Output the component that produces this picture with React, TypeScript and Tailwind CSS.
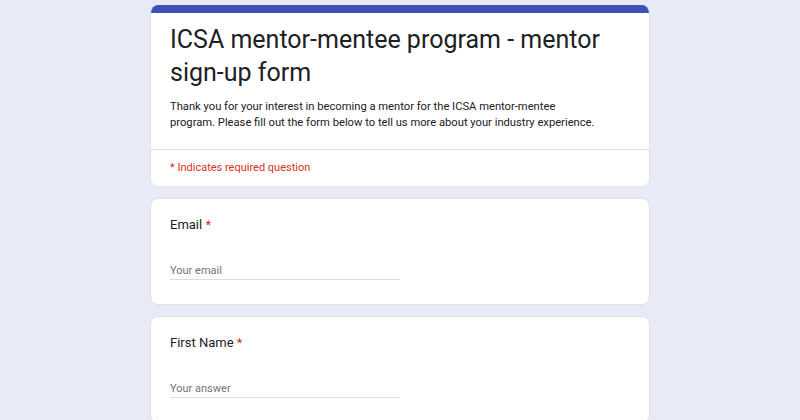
const fields = [
  { label: 'Email', placeholder: 'Your email' },
  { label: 'First Name', placeholder: 'Your answer' },
];

function QuestionCard({ label, placeholder }: { label: string; placeholder: string }) {
  return (
    <div className="bg-white rounded-lg border border-[#dfe2ec] px-[19px] pt-[16px] pb-[24px]">
      <div className="text-[13px] leading-[20px] text-[#202124]">
        {label} <span className="text-[#d93025]">*</span>
      </div>
      <input
        type="text"
        placeholder={placeholder}
        className="mt-[25px] block w-[230px] h-[20px] pt-[2px] bg-transparent border-b border-[#dadce0] text-[11px] leading-[16px] text-[#202124] placeholder:text-[#70757a] outline-none"
      />
    </div>
  );
}

export default function App() {
  return (
    <div
      className="min-h-screen bg-[#e8eaf6] pt-[5px]"
      style={{ fontFamily: 'Roboto, "Noto Sans", "Liberation Sans", sans-serif' }}
    >
      <div className="w-[500px] mx-auto flex flex-col gap-[11px]">
        <div className="bg-white rounded-lg overflow-hidden border border-[#dfe2ec] border-t-0">
          <div className="h-[8px] bg-[#3f51b5]" />
          <div className="px-[19px] pt-[10px] pb-[18px]">
            <h1 className="text-[25px] leading-[33px] text-[#202124]">
              ICSA mentor-mentee program - mentor sign-up form
            </h1>
            <p className="mt-[10px] text-[11.2px] leading-[16px] text-[#202124]">
              Thank you for your interest in becoming a mentor for the ICSA mentor-mentee
              <br />
              program. Please fill out the form below to tell us more about your industry experience.
            </p>
          </div>
          <div className="border-t border-[#dadce0] px-[19px] pt-[4px] pb-[8px]">
            <span className="text-[11px] leading-[16px] text-[#d93025]">* Indicates required question</span>
          </div>
        </div>
        {fields.map((f) => (
          <QuestionCard key={f.label} label={f.label} placeholder={f.placeholder} />
        ))}
      </div>
    </div>
  );
}
